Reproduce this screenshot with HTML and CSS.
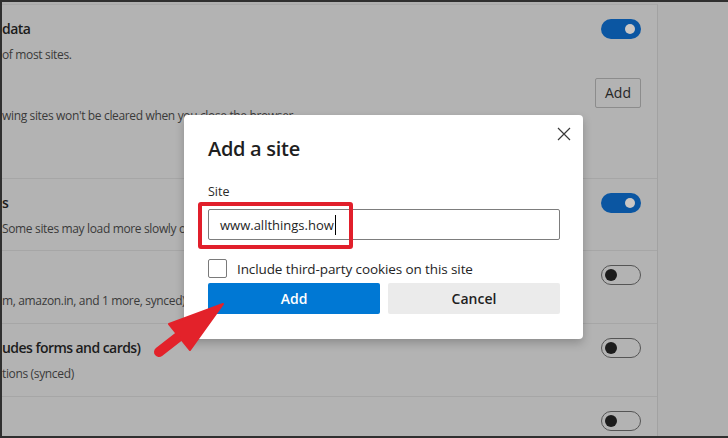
FILE: index.html
```html
<!DOCTYPE html>
<html>
<head>
<meta charset="utf-8">
<link rel="stylesheet" href="styles.css">
</head>
<body>
<div class="screen">
  <div class="page">
    <div class="card">
      <div class="row row-first">
        <div class="row-head">
          <div class="texts">
            <div class="title">data</div>
            <div class="desc">of most sites.</div>
          </div>
          <span class="toggle on"></span>
        </div>
        <div class="add-line"><span class="bg-add">Add</span></div>
        <div class="desc note">wing sites won't be cleared when you close the browser</div>
      </div>
      <div class="row">
        <div class="row-head">
          <div class="texts">
            <div class="title">s</div>
            <div class="desc">Some sites may load more slowly o</div>
          </div>
          <span class="toggle on"></span>
        </div>
      </div>
      <div class="row">
        <div class="row-head">
          <div class="texts">
            <div class="title"></div>
            <div class="desc">m, amazon.in, and 1 more, synced)</div>
          </div>
          <span class="toggle off"></span>
        </div>
      </div>
      <div class="row">
        <div class="row-head">
          <div class="texts">
            <div class="title">udes forms and cards)</div>
            <div class="desc">tions (synced)</div>
          </div>
          <span class="toggle off"></span>
        </div>
      </div>
      <div class="row row-last">
        <div class="row-head">
          <div class="texts">
            <div class="title"></div>
          </div>
          <span class="toggle off"></span>
        </div>
      </div>
    </div>
  </div>

  <div class="dialog">
    <svg class="close" width="14" height="14" viewBox="0 0 14 14"><path d="M1 1 L13 13 M13 1 L1 13" stroke="#3a3a3a" stroke-width="1.2" fill="none"/></svg>
    <div class="d-title">Add a site</div>
    <div class="d-label">Site</div>
    <div class="d-input"><span class="d-value">www.allthings.how</span><span class="caret"></span></div>
    <div class="d-check"><span class="box"></span><span class="d-check-label">Include third-party cookies on this site</span></div>
    <div class="d-buttons">
      <div class="btn primary">Add</div>
      <div class="btn secondary">Cancel</div>
    </div>
  </div>

  <div class="highlight"></div>

  <svg class="arrow" width="728" height="438" viewBox="0 0 728 438">
    <line x1="186" y1="331" x2="159" y2="352" stroke="#e3222a" stroke-width="10" stroke-linecap="round"/>
    <polygon points="223,304 169,324 190,350" fill="#e3222a" stroke="#e3222a" stroke-width="2" stroke-linejoin="round"/>
  </svg>
</div>
</body>
</html>
```

FILE: styles.css
```css
* { box-sizing: border-box; }
html, body { margin: 0; padding: 0; }
body {
  width: 728px;
  height: 438px;
  overflow: hidden;
  font-family: "Open Sans", "Noto Sans", sans-serif;
  background: #b0b0b0;
}
.screen {
  position: relative;
  width: 728px;
  height: 438px;
  border-top: 2px solid #2f2f2f;
  border-left: 2px solid #2f2f2f;
  border-bottom: 2px solid #2f2f2f;
  background: #b0b0b0;
  overflow: hidden;
}
.page {
  padding-top: 2px;
  height: 100%;
}
.card {
  width: 656px;
  height: 100%;
  background: #b3b3b3;
  border-top: 1px solid #a8a8a8;
  border-right: 1px solid #a2a2a2;
}
.row {
  height: 73px;
  border-bottom: 1px solid #a6a6a6;
  padding: 14px 16px 0 0;
}
.row-first { height: 174px; }
.row:nth-child(2) { height: 72px; }
.row-last { border-bottom: none; }
.row-head {
  display: flex;
  justify-content: space-between;
  align-items: flex-start;
}
.texts {
  max-width: 182px;
}
.title {
  font-size: 14px;
  line-height: 20px;
  height: 20px;
  font-weight: 600;
  color: #1c1c1c;
  letter-spacing: -0.55px;
  white-space: nowrap;
}
.desc {
  margin-top: 6px;
  font-size: 12px;
  line-height: 20px;
  color: #3a3a3a;
  letter-spacing: -0.35px;
  white-space: nowrap;
}
.add-line {
  display: flex;
  justify-content: flex-end;
  margin-top: 13px;
}
.bg-add {
  width: 46px;
  height: 30px;
  border: 1px solid #8c8c8c;
  border-radius: 2px;
  font-size: 14px;
  line-height: 28px;
  text-align: center;
  color: #262626;
}
.note {
  margin-top: 0;
  line-height: 16px;
}
.toggle {
  position: relative;
  flex: none;
  width: 40px;
  height: 20px;
  border-radius: 10px;
}
.toggle.on { background: #0b56a2; }
.toggle.on::after {
  content: "";
  position: absolute;
  left: 24px;
  top: 5px;
  width: 10px;
  height: 10px;
  border-radius: 50%;
  background: #cbc7c4;
}
.toggle.off { border: 1px solid #555; }
.toggle.off::after {
  content: "";
  position: absolute;
  left: 3px;
  top: 3px;
  width: 12px;
  height: 12px;
  border-radius: 50%;
  background: #1c1c1c;
}

/* dialog */
.dialog {
  position: absolute;
  left: 182px;
  top: 113px;
  width: 399px;
  height: 224px;
  background: #fff;
  border-radius: 4px;
  box-shadow: 0 4px 10px rgba(0,0,0,0.22);
  padding: 20px 23px 0 24px;
  color: #1f1f1f;
}
.close {
  position: absolute;
  right: 12px;
  top: 12px;
}
.d-title {
  font-size: 20px;
  line-height: 28px;
  font-weight: 600;
  letter-spacing: -0.3px;
}
.d-label {
  margin-top: 21px;
  font-size: 12.5px;
  line-height: 16px;
  color: #2a2a2a;
}
.d-input {
  margin-top: 9px;
  height: 31px;
  border: 1px solid #7d7d7d;
  border-radius: 2px;
  padding-left: 11px;
  display: flex;
  align-items: center;
  font-size: 13px;
  color: #1f1f1f;
}
.caret {
  width: 1px;
  height: 20px;
  background: #000;
  margin-left: 1px;
}
.d-check {
  margin-top: 19px;
  display: flex;
  align-items: center;
  gap: 10px;
  height: 19px;
}
.box {
  width: 19px;
  height: 19px;
  border: 1px solid #7a7a7a;
  border-radius: 2px;
}
.d-check-label {
  font-size: 13.5px;
  letter-spacing: -0.1px;
  color: #242424;
}
.d-buttons {
  margin-top: 5px;
  display: flex;
  gap: 8px;
}
.btn {
  width: 172px;
  height: 31px;
  border-radius: 2px;
  font-size: 14px;
  font-weight: 600;
  line-height: 31px;
  text-align: center;
}
.primary { background: #0078d4; color: #fff; }
.secondary { background: #ebebeb; color: #1f1f1f; }

.highlight {
  position: absolute;
  left: 196px;
  top: 200px;
  width: 155px;
  height: 47px;
  border: 4px solid #e11f2b;
  border-radius: 3px;
}
.arrow {
  position: absolute;
  left: -2px;
  top: -2px;
}
```
